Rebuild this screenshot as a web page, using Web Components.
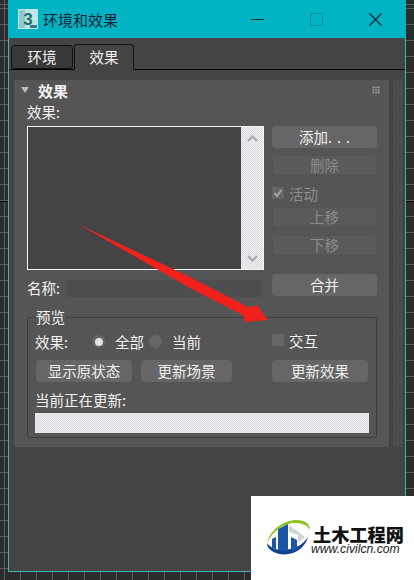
<!DOCTYPE html>
<html lang="zh"><head><meta charset="utf-8">
<style>
html,body{margin:0;padding:0}
body{width:414px;height:580px;overflow:hidden;position:relative;font-family:"Noto Sans CJK SC","Liberation Sans",sans-serif;
background-color:#2c2c2c;
background-image:linear-gradient(#000,#000),repeating-linear-gradient(0deg,#5e5e5e 0 1px,transparent 1px 16px),repeating-linear-gradient(90deg,#5a5a5a 0 1px,transparent 1px 16px);
background-size:100% 1px,auto,auto;background-repeat:no-repeat,repeat,repeat;
background-position:0 201px,0 5px,4px 0}
</style></head><body>
<template id="t-window"><style>
:host{display:flex;flex-direction:column;box-sizing:border-box;margin-left:8px;width:398px;height:572px;background:#444;border:1px solid #3fb3ad;border-top:0}
.bar{flex:none;height:38px;margin:0 -1px;background:#00b4c4;display:flex;align-items:center;color:#123;font-size:15px;padding-left:10px}
.ico{flex:none;width:20px;height:20px;margin-right:5px}
.title{flex:1}
.ctl{flex:none;display:flex;margin-right:24px;gap:46px;align-items:center}
.ctl svg{display:block;width:13px;height:13px}
</style>
<div class="bar">
<svg class="ico" viewBox="0 0 20 20"><rect width="20" height="20" fill="#bfe6e4"/><rect x="1" y="1" width="6" height="18" fill="#8fc9cc"/><text x="10" y="15.5" font-family="Liberation Sans" font-weight="700" font-size="17" text-anchor="middle" fill="#1c6e74">3</text><path d="M12 16h7v3h-7z" fill="#2a7f86"/></svg>
<span class="title">环境和效果</span>
<div class="ctl">
<svg viewBox="0 0 13 13"><path d="M0 6.5h13" stroke="#123" stroke-width="1"/></svg>
<svg viewBox="0 0 13 13"><rect x=".5" y=".5" width="12" height="12" fill="none" stroke="#0a8f9d"/></svg>
<svg viewBox="0 0 13 13"><path d="M.5.5l12 12M12.5.5l-12 12" stroke="#123" stroke-width="1.1"/></svg>
</div></div>
<slot></slot></template>

<template id="t-tabs"><style>
:host{display:flex;align-items:flex-end;height:26px;margin-top:6px;box-sizing:border-box;padding-left:2px;background:linear-gradient(#0000 25px,#000 25px)}
</style><slot></slot></template>

<template id="t-tab"><style>
:host{display:flex;align-items:center;justify-content:center;box-sizing:border-box;color:#f0f0f0;font-size:14.5px;width:62px;height:24px;margin-bottom:1px;padding-bottom:2px;background:#383838;border:1px solid #111;border-radius:3px;margin-right:1px}
:host([active]){width:60px;height:26px;margin-bottom:0;background:#444;border-bottom-color:#444;border-radius:3px 3px 0 0}
</style><slot></slot></template>

<template id="t-body"><style>
:host{display:flex;margin:10px 0 0 5px;gap:4px}
.strip{flex:none;width:10px;height:367px;background:repeating-conic-gradient(#4f4f4f 0 25%,#484848 0 50%) 0 0/3px 3px}
</style><slot></slot><i class="strip"></i></template>

<template id="t-panel"><style>
:host{display:block;flex:none;box-sizing:border-box;width:375px;height:367px;padding:0 12px 0 13px;background:#555;border-radius:2px;color:#f2f2f2;font-size:14.5px}
.head{display:flex;align-items:center;box-sizing:border-box;height:22px;padding-bottom:2px;font-weight:700;font-size:15px;margin-left:-6px}
.tri{width:0;height:0;border:4px solid transparent;border-top:6px solid #bbb;border-bottom:0;margin-right:9px}
.sp{flex:1}
.grip{width:8px;height:8px;margin-right:-3px;background:radial-gradient(circle,#aaa 0 .8px,transparent 1px) 0 0/2.7px 2.7px}
</style>
<div class="head"><i class="tri"></i><span>效果</span><span class="sp"></span><i class="grip"></i></div>
<slot></slot></template>

<template id="t-btn"><style>
:host{display:flex;align-items:center;justify-content:center;box-sizing:border-box;height:22px;padding-bottom:2px;background:#666;border-radius:4px;color:#f0f0f0;font-size:14.5px;white-space:nowrap}
:host([disabled]){background:#5a5a5a;color:#8c8c8c;border:1px dotted #4c4c4c}
</style><slot></slot></template>

<template id="t-list"><style>
:host{display:flex;box-sizing:border-box;width:237px;height:144px;border:1px solid #f4f4f4;background:#444}
.fill{flex:1}
.sb{flex:none;width:22px;background:repeating-conic-gradient(#efeef1 0 25%,#dcdbdf 0 50%) 0 0/2px 2px;display:flex;flex-direction:column;justify-content:space-between;align-items:center;padding:8px 0 7px;box-sizing:border-box}
svg{display:block;width:11px;height:7px}
</style><div class="fill"></div><div class="sb">
<svg viewBox="0 0 11 7"><path d="M1 6l4.500-4.500L10 6" fill="none" stroke="#a9a9ac" stroke-width="2"/></svg>
<svg viewBox="0 0 11 7"><path d="M1 1l4.500 4.500L10 1" fill="none" stroke="#a9a9ac" stroke-width="2"/></svg>
</div></template>

<template id="t-check"><style>
:host{display:flex;align-items:center;height:18px;font-size:14.5px;color:#f2f2f2}
:host([disabled]){color:#8c8c8c}
.b{flex:none;box-sizing:border-box;width:12px;height:12px;background:#666;margin-right:5px;display:flex}
svg{width:12px;height:12px}
</style><span class="b"><slot name="mark"></slot></span><slot></slot></template>

<template id="t-radio"><style>
:host{display:flex;align-items:center;height:18px;font-size:14.5px;color:#f2f2f2}
.r{flex:none;width:13px;height:13px;border-radius:50%;background:#666;margin-right:10px;display:flex;align-items:center;justify-content:center}
:host([on]) .r::after{content:"";width:8px;height:8px;border-radius:50%;background:#e2e2e2}
</style><span class="r"></span><slot></slot></template>

<template id="t-group"><style>
:host{display:block;box-sizing:border-box;width:350px;height:121px;margin-top:20px;border:1px solid #3e3e3e;border-radius:2px;padding:0 7px;font-size:14.5px}
.lg{display:block;width:fit-content;height:16px;line-height:16px;margin-top:-9px;padding:0 1px;background:#555;color:#f2f2f2}
</style><span class="lg">预览</span><slot></slot></template>

<template id="t-arrow"><style>
:host{display:block;position:absolute;left:0;top:0;width:414px;height:580px;pointer-events:none}
svg{display:block;width:414px;height:580px}
</style><svg viewBox="0 0 414 580"><path d="M78 224 L190 277 L249 307.500 L257 305 L268 320 L245 322 L243.500 315.500 L190 288 Z" fill="#f0201c"/></svg></template>

<template id="t-logo"><style>
:host{display:block;position:absolute;left:251px;top:496px;width:163px;height:84px;background:#fff}
.wrap{display:flex;margin:24px 0 0 16px;align-items:flex-start}
svg{flex:none;width:46px;height:36px;display:block}
.t{margin-top:4px;width:100px}
.cn{display:block;font:900 18.200px/20px "Noto Sans CJK SC",sans-serif;color:#111;white-space:nowrap}
.en{display:block;font:italic 400 12.200px/10px "Liberation Sans",sans-serif;color:#222;white-space:nowrap;margin-left:-2px}
</style><div class="wrap">
<svg viewBox="0 0 46 36">
<path d="M0 23C0 32 14 37 26 33 34 30 39 24 41 17 36 25 26 30 16 30 8 30 3 27 0 23Z" fill="#12438f"/>
<path d="M0 23C3 10 16 0 30 0 38 0 43 4 43 10 40 5 35 3 29 3 16 3 6 11 0 23Z" fill="#8fc31f"/>
<path d="M5 28V19L9 17V29ZM11 30V9L21 4V31ZM24 31V17L30 20V30Z" fill="#1b57a6"/>
<path d="M22 5L38 17 31 23 31 15 22 12Z" fill="#cfd6d8"/>
</svg>
<div class="t"><span class="cn">土木工程网</span><span class="en">www.civilcn.com</span></div>
</div></template>

<script>
const def=(n,t)=>customElements.define(n,class extends HTMLElement{constructor(){super();this.attachShadow({mode:"open"}).append(document.getElementById(t).content.cloneNode(true))}});
[["max-window","t-window"],["max-tabs","t-tabs"],["max-tab","t-tab"],["max-body","t-body"],["max-panel","t-panel"],["max-btn","t-btn"],["max-list","t-list"],["max-check","t-check"],["max-radio","t-radio"],["max-group","t-group"],["red-arrow","t-arrow"],["site-logo","t-logo"]].forEach(a=>def(...a));
customElements.define("fx-layout",class extends HTMLElement{constructor(){super();const s=this.attachShadow({mode:"open"});s.innerHTML=`<style>
:host{display:block}
.lb{display:block;height:18px;line-height:18px;margin-top:1px;margin-bottom:5px}
.cols{display:flex;gap:8px;height:171px}
.l,.r{display:flex;flex-direction:column}
.l{width:237px}.r{width:105px}
.name{display:flex;align-items:center;margin-top:10px;height:17px}
.name span{width:39px;flex:none;margin-top:-2px}
.inp{flex:1;height:17px;background:#4e4e4e;margin-right:2px}
.row{display:grid;grid-template-columns:237px 1fr}
.left{display:flex;align-items:center}
.pair{display:flex;gap:9px;padding-left:1px}
.pb{height:20px;background:repeating-conic-gradient(#eeedf0 0 25%,#dedde1 0 50%) 0 0/2px 2px;width:334px;margin-top:4px}
.dots{letter-spacing:5px;margin-right:-5px}
</style>
<span class="lb">效果:</span>
<div class="cols">
<div class="l"><max-list></max-list><div class="name"><span>名称:</span><i class="inp"></i></div></div>
<div class="r">
<max-btn>添加<span class="dots">...</span></max-btn>
<max-btn disabled style="margin-top:7px;height:21px">删除</max-btn>
<max-check disabled style="margin-top:8px"><svg slot="mark" viewBox="0 0 12 12" width="12" height="12"><path d="M2.500 6l2.500 3 4.500-6" fill="none" stroke="#a5a5a5" stroke-width="2"/></svg>活动</max-check>
<max-btn disabled style="margin-top:5px;height:21px">上移</max-btn>
<max-btn disabled style="margin-top:7px;height:21px">下移</max-btn>
<max-btn style="margin-top:18px">合并</max-btn>
</div></div>
<max-group>
<div class="row" style="margin-top:6px;height:18px"><div class="left"><span style="width:57px">效果:</span><max-radio on style="width:57px">全部</max-radio><max-radio>当前</max-radio></div><max-check>交互</max-check></div>
<div class="row" style="margin-top:11px"><div class="pair"><max-btn style="width:96px">显示原状态</max-btn><max-btn style="width:91px">更新场景</max-btn></div><max-btn style="width:96px">更新效果</max-btn></div>
<span class="lb" style="margin:9px 0 0">当前正在更新:</span>
<div class="pb"></div>
</max-group>`}});
</script>
<max-window>
<max-tabs><max-tab>环境</max-tab><max-tab active>效果</max-tab></max-tabs>
<max-body><max-panel><fx-layout></fx-layout></max-panel></max-body>
</max-window>
<red-arrow></red-arrow>
<site-logo></site-logo>
</body></html>
